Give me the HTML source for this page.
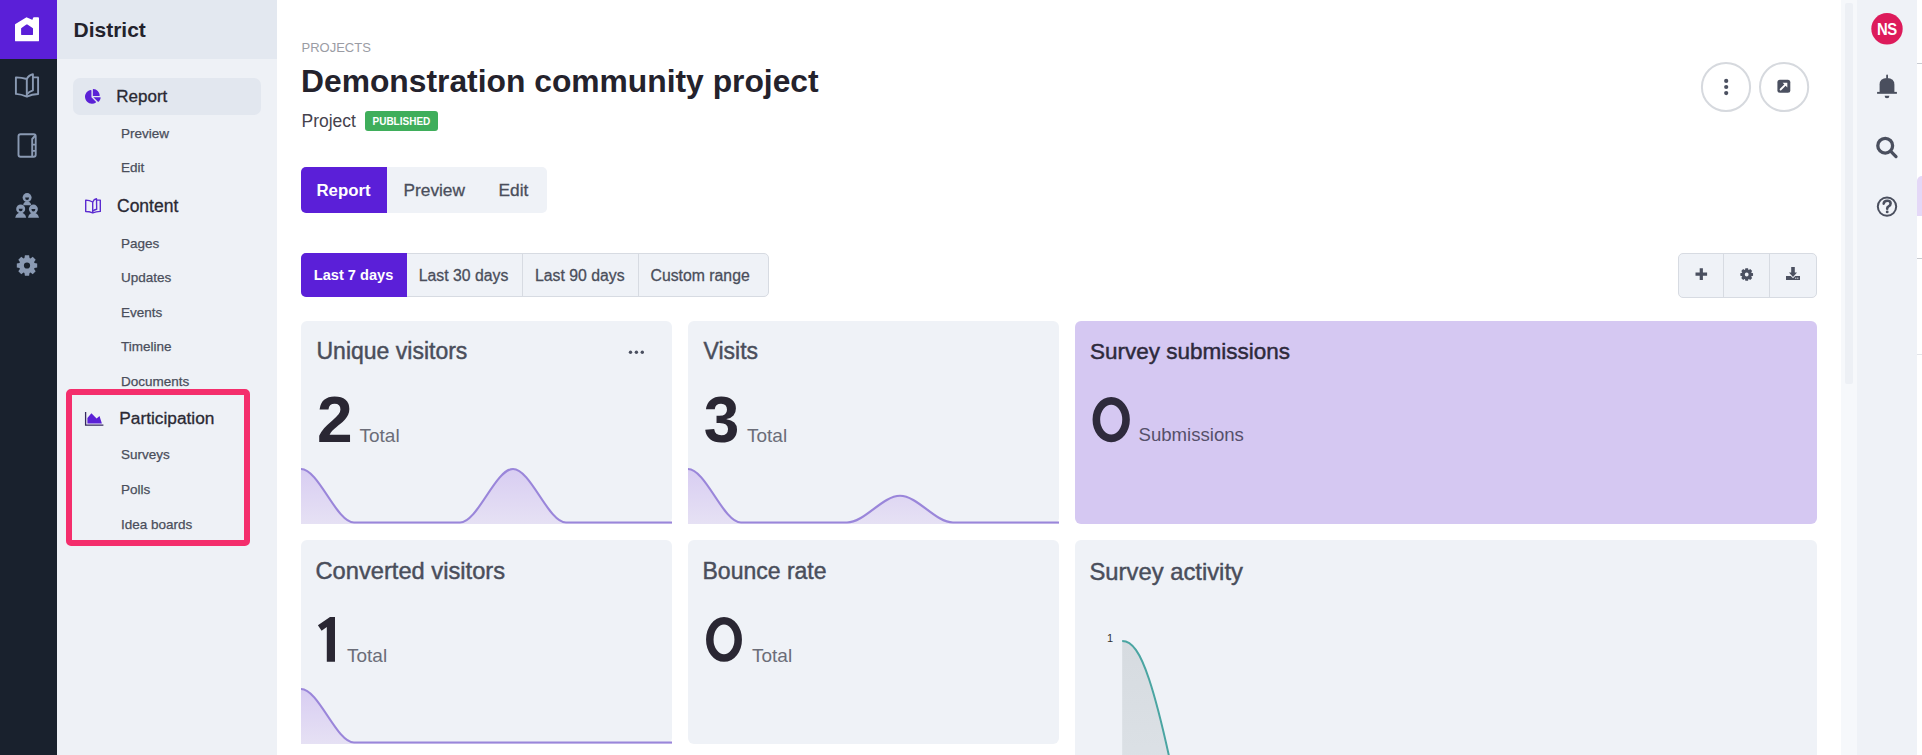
<!DOCTYPE html>
<html><head><meta charset="utf-8">
<style>
html,body{margin:0;padding:0;}
body{width:1922px;height:755px;overflow:hidden;position:relative;background:#fff;font-family:"Liberation Sans",sans-serif;}
.a{position:absolute;}
.t{position:absolute;white-space:nowrap;line-height:1;}
svg{position:absolute;left:0;top:0;overflow:visible;}
</style></head><body>
<div class="a" style="left:0;top:0;width:57px;height:755px;background:#19212d"></div>
<div class="a" style="left:0;top:0;width:57px;height:59px;background:#5b1fd8"></div>
<div class="a" style="left:57px;top:0;width:220px;height:755px;background:#eef1f6"></div>
<div class="a" style="left:57px;top:0;width:220px;height:59px;background:#e3e8f0"></div>
<div class="a" style="left:73px;top:78px;width:188px;height:37px;border-radius:7px;background:#e2e7ef"></div>
<div class="a" style="left:65.5px;top:389px;width:172px;height:144.5px;border:6.5px solid #f42e6c;border-radius:5px"></div>
<!-- scrollbar + right rail -->
<div class="a" style="left:1841px;top:0;width:16px;height:755px;background:#f6f8fb"></div>
<div class="a" style="left:1845px;top:3px;width:8px;height:381px;border-radius:2px;background:#edf0f5"></div>
<div class="a" style="left:1857px;top:0;width:60px;height:755px;background:#eff2f7"></div>
<div class="a" style="left:1917px;top:63px;width:5px;height:1px;background:#c9ccd2"></div>
<div class="a" style="left:1917px;top:258px;width:5px;height:1px;background:#c9ccd2"></div>
<div class="a" style="left:1917px;top:354px;width:5px;height:1px;background:#e3e5e9"></div>
<div class="a" style="left:1917px;top:176px;width:5px;height:40px;border-top-left-radius:5px;background:#e4d8f7"></div>
<!-- tabs -->
<div class="a" style="left:301px;top:167px;width:246px;height:46px;border-radius:5px;background:#eff2f7"></div>
<div class="a" style="left:301px;top:167px;width:86px;height:46px;border-radius:5px 0 0 5px;background:#5b1fd8"></div>
<!-- date range -->
<div class="a" style="left:301px;top:253px;width:465.5px;height:41.5px;border:1px solid #d7dbe2;border-radius:5px;background:#eff2f7"></div>
<div class="a" style="left:301px;top:253px;width:106px;height:43.5px;border-radius:5px 0 0 5px;background:#5b1fd8"></div>
<div class="a" style="left:522px;top:253px;width:1px;height:43px;background:#d7dbe2"></div>
<div class="a" style="left:638px;top:253px;width:1px;height:43px;background:#d7dbe2"></div>
<!-- toolbar -->
<div class="a" style="left:1678px;top:253px;width:136.5px;height:42.5px;border:1px solid #d7dbe2;border-radius:5px;background:#eff2f7"></div>
<div class="a" style="left:1723px;top:253px;width:1px;height:44.5px;background:#d7dbe2"></div>
<div class="a" style="left:1769px;top:253px;width:1px;height:44.5px;background:#d7dbe2"></div>
<!-- cards -->
<div class="a" style="left:301px;top:321px;width:371px;height:203px;border-radius:6px;background:#eff2f7;overflow:hidden"></div>
<div class="a" style="left:688px;top:321px;width:371px;height:203px;border-radius:6px;background:#eff2f7"></div>
<div class="a" style="left:1075px;top:321px;width:742px;height:203px;border-radius:6px;background:#d5c8f2"></div>
<div class="a" style="left:301px;top:540px;width:371px;height:204px;border-radius:6px;background:#eff2f7"></div>
<div class="a" style="left:688px;top:540px;width:371px;height:204px;border-radius:6px;background:#eff2f7"></div>
<div class="a" style="left:1075px;top:540px;width:742px;height:230px;border-radius:6px;background:#eff2f7"></div>
<svg width="1922" height="755" viewBox="0 0 1922 755">
<defs>
<linearGradient id="pg" x1="0" y1="0" x2="0" y2="1"><stop offset="0" stop-color="#d8cdf2"/><stop offset="1" stop-color="#e6e1f4"/></linearGradient>
<linearGradient id="gg" x1="0" y1="0" x2="0" y2="1"><stop offset="0" stop-color="#d6dbe0"/><stop offset="1" stop-color="#dce1e6"/></linearGradient>
</defs>
<!-- logo -->
<g transform="translate(15 17)" stroke-linejoin="round" stroke-width="1.8"><path fill="#fff" stroke="#fff" d="M0.9 7.8 L11.6 1.2 L17.9 4.0 L18.9 1.2 L23.1 1.2 L23.1 23.4 L0.9 23.4 Z"/><path fill="#5b1fd8" stroke="#5b1fd8" d="M11.9 8.3 L7 11.8 L7 17.2 L17.1 17.2 L17.1 11.8 Z"/></g>
<!-- rail book -->
<g transform="translate(14.9 73.4)" fill="none" stroke="#8a9ab3" stroke-width="1.9" stroke-linejoin="round">
<path d="M1 4 Q6.5 3.9 11.9 5.6 L11.9 23.2 Q6.5 20.9 1 20.5 Z"/>
<path d="M11.9 5.6 Q13.8 1.6 18 0.8 L18 17 Q14 18.3 11.9 21"/>
<path d="M18 4 L23.2 4 L23.2 20.6 Q17 20.8 11.9 23.2"/>
</g>
<!-- rail notebook -->
<g fill="none" stroke="#8a9ab3" stroke-width="1.9" stroke-linejoin="round">
<rect x="18.5" y="134.2" width="17.2" height="22.6" rx="2"/>
<path d="M35.3 135.5 L32.2 139 L32.2 156.5"/>
<path d="M32.2 144.6 H35.5 M32.2 150.9 H35.5"/>
</g>
<!-- rail people -->
<g fill="#8a9ab3">
<circle cx="27.1" cy="197.6" r="4.5"/>
<path d="M23.2 205.2 Q23.5 201.6 27.1 201.6 Q30.7 201.6 31.2 205.2 Z"/>
<circle cx="20.7" cy="208.9" r="4.5"/>
<path d="M15.2 217.8 Q16.3 212.8 20.7 212.8 Q25.1 212.8 26.2 217.8 Z"/>
<circle cx="33.4" cy="209.1" r="4.5"/>
<path d="M28 217.8 Q29.1 212.8 33.4 212.8 Q37.8 212.8 39 217.8 Z"/>
</g>
<g fill="#19212d">
<path d="M25.1 197.5 H29.1 Q29 200 27.1 200 Q25.2 200 25.1 197.5 Z"/>
<path d="M18.7 208.8 H22.7 Q22.6 211.3 20.7 211.3 Q18.8 211.3 18.7 208.8 Z"/>
<path d="M31.4 209 H35.4 Q35.3 211.5 33.4 211.5 Q31.5 211.5 31.4 209 Z"/>
</g>
<!-- rail gear -->
<path fill="#8a9ab3" fill-rule="evenodd" d="M24.45 258.02 L24.91 255.31 L29.09 255.31 L29.55 258.02 L30.48 258.41 L32.73 256.82 L35.68 259.77 L34.09 262.02 L34.48 262.95 L37.19 263.41 L37.19 267.59 L34.48 268.05 L34.09 268.98 L35.68 271.23 L32.73 274.18 L30.48 272.59 L29.55 272.98 L29.09 275.69 L24.91 275.69 L24.45 272.98 L23.52 272.59 L21.27 274.18 L18.32 271.23 L19.91 268.98 L19.52 268.05 L16.81 267.59 L16.81 263.41 L19.52 262.95 L19.91 262.02 L18.32 259.77 L21.27 256.82 L23.52 258.41 Z M30.10 265.50 A3.1 3.1 0 1 0 23.90 265.50 A3.1 3.1 0 1 0 30.10 265.50 Z"/>
<!-- sidebar pie -->
<g transform="translate(85 89) scale(0.0288)"><path fill="#5b21d6" d="M527.79 288H290.5l158.03 158.03c6.04 6.04 15.98 6.53 22.19 .68 38.7-36.46 65.32-85.61 73.13-140.86 1.34-9.46-6.51-17.85-16.06-17.85zm-15.83-64.8C503.72 103.74 408.26 8.28 288.8 .04 279.68-.59 272 7.1 272 16.24V240h223.77c9.14 0 16.82-7.68 16.19-16.8zM224 288V50.71c0-9.550-8.39-17.4-17.84-16.06C86.99 51.49-4.1 155.6 .14 280.37 4.5 408.51 114.83 513.59 243.03 511.98c50.4-.63 96.97-16.87 135.26-44.03 7.9-5.6 8.42-17.23 1.57-24.08L224 288z"/></g>
<!-- sidebar content book -->
<g transform="translate(85 198.2)" fill="none" stroke="#5b2bd0" stroke-width="1.4" stroke-linejoin="round">
<path d="M0.7 1.9 Q4.2 1.8 7.7 3.8 L7.7 14.6 Q4.2 13.3 0.7 13.3 Z"/>
<path d="M7.7 3.8 Q9 0.9 11.5 0.6 L11.7 11 Q9.2 11.5 7.7 12.9"/>
<path d="M11.7 1.9 L15.3 1.9 L15.3 13.2 Q11 13.4 7.7 14.6"/>
</g>
<!-- participation chart icon -->
<g transform="translate(85 411.9)">
<path d="M0.6 0 V13.2 H18.4" fill="none" stroke="#35285e" stroke-width="1.3"/>
<path fill="#5b21d6" d="M2.4 11.7 V6.2 L6.4 1.4 L11.6 6.5 L14.5 4.1 L16.9 11.7 Z"/>
</g>
<!-- header circles -->
<circle cx="1726" cy="87" r="24.1" fill="#fff" stroke="#d6d9de" stroke-width="2"/>
<circle cx="1726.2" cy="80.9" r="2.1" fill="#4b5060"/>
<circle cx="1726.2" cy="87" r="2.1" fill="#4b5060"/>
<circle cx="1726.2" cy="93.1" r="2.1" fill="#4b5060"/>
<circle cx="1784.1" cy="87" r="24.1" fill="#fff" stroke="#d6d9de" stroke-width="2"/>
<rect x="1777.4" y="79.8" width="12.9" height="12.9" rx="2.5" fill="#4b5060"/>
<path d="M1780.6 89.5 L1786.2 83.9" stroke="#fff" stroke-width="1.8" stroke-linecap="round"/>
<path d="M1782.6 82.8 H1787.3 V87.5 Z" fill="#fff"/>
<!-- toolbar icons -->
<path d="M1701.3 268.3 V279.9 M1695.5 274.1 H1707.1" stroke="#4b5060" stroke-width="3.2"/>
<path fill="#4b5060" fill-rule="evenodd" d="M1745.03 269.79 L1745.36 268.14 L1748.04 268.14 L1748.37 269.79 L1748.85 269.99 L1750.25 269.05 L1752.15 270.95 L1751.21 272.35 L1751.41 272.83 L1753.06 273.16 L1753.06 275.84 L1751.41 276.17 L1751.21 276.65 L1752.15 278.05 L1750.25 279.95 L1748.85 279.01 L1748.37 279.21 L1748.04 280.86 L1745.36 280.86 L1745.03 279.21 L1744.55 279.01 L1743.15 279.95 L1741.25 278.05 L1742.19 276.65 L1741.99 276.17 L1740.34 275.84 L1740.34 273.16 L1741.99 272.83 L1742.19 272.35 L1741.25 270.95 L1743.15 269.05 L1744.55 269.99 Z M1748.60 274.50 A1.9 1.9 0 1 0 1744.80 274.50 A1.9 1.9 0 1 0 1748.60 274.50 Z"/>
<g fill="#4b5060">
<rect x="1791.2" y="267" width="3.6" height="6"/>
<path d="M1789 272.5 H1797 L1793 277 Z"/>
<path d="M1786 276 H1790.8 L1793 278.2 L1795.2 276 H1800 V280 H1786 Z"/>
</g>
<circle cx="1795.8" cy="278.2" r="0.6" fill="#eff2f7"/><circle cx="1797.8" cy="278.2" r="0.6" fill="#eff2f7"/>
<!-- card dots -->
<circle cx="630.5" cy="352.2" r="1.7" fill="#4b5060"/><circle cx="636.4" cy="352.2" r="1.7" fill="#4b5060"/><circle cx="642.3" cy="352.2" r="1.7" fill="#4b5060"/>
<!-- charts -->
<path d="M301.00 469.00 C318.67 469.00 336.33 522.50 354.00 522.50 C371.67 522.50 389.33 522.50 407.00 522.50 C424.67 522.50 442.33 522.50 460.00 522.50 C477.67 522.50 495.33 469.00 513.00 469.00 C530.67 469.00 548.33 522.50 566.00 522.50 C583.67 522.50 601.33 522.50 619.00 522.50 C636.67 522.50 654.33 522.50 672.00 522.50 L672 524.0 L301 524.0 Z" fill="url(#pg)"/><path d="M301.00 469.00 C318.67 469.00 336.33 522.50 354.00 522.50 C371.67 522.50 389.33 522.50 407.00 522.50 C424.67 522.50 442.33 522.50 460.00 522.50 C477.67 522.50 495.33 469.00 513.00 469.00 C530.67 469.00 548.33 522.50 566.00 522.50 C583.67 522.50 601.33 522.50 619.00 522.50 C636.67 522.50 654.33 522.50 672.00 522.50" fill="none" stroke="#9a86da" stroke-width="2.2"/>
<path d="M688.00 469.00 C705.67 469.00 723.33 522.50 741.00 522.50 C758.67 522.50 776.33 522.50 794.00 522.50 C811.67 522.50 829.33 522.50 847.00 522.50 C864.67 522.50 882.33 495.75 900.00 495.75 C917.67 495.75 935.33 522.50 953.00 522.50 C970.67 522.50 988.33 522.50 1006.00 522.50 C1023.67 522.50 1041.33 522.50 1059.00 522.50 L1059 524.0 L688 524.0 Z" fill="url(#pg)"/><path d="M688.00 469.00 C705.67 469.00 723.33 522.50 741.00 522.50 C758.67 522.50 776.33 522.50 794.00 522.50 C811.67 522.50 829.33 522.50 847.00 522.50 C864.67 522.50 882.33 495.75 900.00 495.75 C917.67 495.75 935.33 522.50 953.00 522.50 C970.67 522.50 988.33 522.50 1006.00 522.50 C1023.67 522.50 1041.33 522.50 1059.00 522.50" fill="none" stroke="#9a86da" stroke-width="2.2"/>
<path d="M301.00 689.00 C318.67 689.00 336.33 742.50 354.00 742.50 C371.67 742.50 389.33 742.50 407.00 742.50 C424.67 742.50 442.33 742.50 460.00 742.50 C477.67 742.50 495.33 742.50 513.00 742.50 C530.67 742.50 548.33 742.50 566.00 742.50 C583.67 742.50 601.33 742.50 619.00 742.50 C636.67 742.50 654.33 742.50 672.00 742.50 L672 744.0 L301 744.0 Z" fill="url(#pg)"/><path d="M301.00 689.00 C318.67 689.00 336.33 742.50 354.00 742.50 C371.67 742.50 389.33 742.50 407.00 742.50 C424.67 742.50 442.33 742.50 460.00 742.50 C477.67 742.50 495.33 742.50 513.00 742.50 C530.67 742.50 548.33 742.50 566.00 742.50 C583.67 742.50 601.33 742.50 619.00 742.50 C636.67 742.50 654.33 742.50 672.00 742.50" fill="none" stroke="#9a86da" stroke-width="2.2"/>
<path d="M1122.2 641 C1132 641 1140 652 1149 679 C1155 697 1161 718 1172 770 L1122.2 770 Z" fill="url(#gg)"/>
<path d="M1122.2 641 C1132 641 1140 652 1149 679 C1155 697 1161 718 1172 770" fill="none" stroke="#4aa5a2" stroke-width="2"/>
<!-- right rail -->
<circle cx="1887" cy="28.8" r="15.7" fill="#dd1b5b"/>
<g fill="#4a4f5e">
<rect x="1886.2" y="74.6" width="1.8" height="4" rx="0.9"/>
<path d="M1879.6 92 L1879.6 84.6 Q1879.6 77.9 1887 77.9 Q1894.4 77.9 1894.4 84.6 L1894.4 92 Z"/>
<rect x="1877.1" y="91.9" width="19.8" height="1.9"/>
<path d="M1884.6 95.8 H1889.4 Q1889.4 98.3 1887 98.3 Q1884.6 98.3 1884.6 95.8 Z"/>
</g>
<circle cx="1885.2" cy="145.7" r="7.4" fill="none" stroke="#4a4f5e" stroke-width="3.3"/>
<path d="M1890.6 151.2 L1896 156.6" stroke="#4a4f5e" stroke-width="3.3" stroke-linecap="round"/>
<circle cx="1887" cy="206.6" r="9.2" fill="none" stroke="#4a4f5e" stroke-width="2"/>
<path d="M1883.7 203.6 Q1884 200.8 1887.3 200.8 Q1890.6 200.8 1890.6 203.5 Q1890.6 205.3 1888.6 206.3 Q1887.2 207 1887.2 208.4 V208.8" fill="none" stroke="#4a4f5e" stroke-width="2.6" stroke-linecap="round" stroke-linejoin="round"/>
<circle cx="1887.2" cy="211.9" r="1.45" fill="#4a4f5e"/>
</svg>
<div class="t" style="left:73.5px;top:19.4px;font-size:21px;font-weight:700;color:#23222c;">District</div>
<div class="t" style="left:116.3px;top:88.4px;font-size:17px;font-weight:400;color:#2a2933;-webkit-text-stroke:0.3px #2a2933">Report</div>
<div class="t" style="left:117px;top:197.8px;font-size:17.5px;font-weight:400;color:#2a2933;-webkit-text-stroke:0.3px #2a2933">Content</div>
<div class="t" style="left:119.3px;top:409.6px;font-size:17.3px;font-weight:400;color:#2a2933;-webkit-text-stroke:0.3px #2a2933">Participation</div>
<div class="t" style="left:121px;top:126.51px;font-size:13.5px;font-weight:400;color:#4a4e5b;-webkit-text-stroke:0.25px #4a4e5b">Preview</div>
<div class="t" style="left:121px;top:161.11px;font-size:13.5px;font-weight:400;color:#4a4e5b;-webkit-text-stroke:0.25px #4a4e5b">Edit</div>
<div class="t" style="left:121px;top:237.11px;font-size:13.5px;font-weight:400;color:#4a4e5b;-webkit-text-stroke:0.25px #4a4e5b">Pages</div>
<div class="t" style="left:121px;top:270.81px;font-size:13.5px;font-weight:400;color:#4a4e5b;-webkit-text-stroke:0.25px #4a4e5b">Updates</div>
<div class="t" style="left:121px;top:306.01px;font-size:13.5px;font-weight:400;color:#4a4e5b;-webkit-text-stroke:0.25px #4a4e5b">Events</div>
<div class="t" style="left:121px;top:339.51px;font-size:13.5px;font-weight:400;color:#4a4e5b;-webkit-text-stroke:0.25px #4a4e5b">Timeline</div>
<div class="t" style="left:121px;top:374.51px;font-size:13.5px;font-weight:400;color:#4a4e5b;-webkit-text-stroke:0.25px #4a4e5b">Documents</div>
<div class="t" style="left:121px;top:448.41px;font-size:13.5px;font-weight:400;color:#4a4e5b;-webkit-text-stroke:0.25px #4a4e5b">Surveys</div>
<div class="t" style="left:121px;top:483.31px;font-size:13.5px;font-weight:400;color:#4a4e5b;-webkit-text-stroke:0.25px #4a4e5b">Polls</div>
<div class="t" style="left:121px;top:518.21px;font-size:13.5px;font-weight:400;color:#4a4e5b;-webkit-text-stroke:0.25px #4a4e5b">Idea boards</div>
<div class="t" style="left:301.5px;top:40.8px;font-size:13px;font-weight:400;color:#9a9ca4;">PROJECTS</div>
<div class="t" style="left:301px;top:65.5px;font-size:31.8px;font-weight:700;color:#24222c;">Demonstration community project</div>
<div class="t" style="left:301.5px;top:113.3px;font-size:17.5px;font-weight:400;color:#45424d;">Project</div>
<div class="a" style="left:365px;top:111px;width:72.5px;height:19.6px;border-radius:3px;background:#3fae5b"></div>
<div class="t" style="left:372.5px;top:116.5px;font-size:10px;font-weight:700;color:#fff;">PUBLISHED</div>
<div class="t" style="left:316.5px;top:182.6px;font-size:16.8px;font-weight:700;color:#fff;">Report</div>
<div class="t" style="left:403.5px;top:182px;font-size:17.3px;font-weight:400;color:#4a4e5b;-webkit-text-stroke:0.3px #4a4e5b">Preview</div>
<div class="t" style="left:498.5px;top:182px;font-size:17.3px;font-weight:400;color:#4a4e5b;-webkit-text-stroke:0.3px #4a4e5b">Edit</div>
<div class="t" style="left:313.8px;top:267.7px;font-size:14.6px;font-weight:700;color:#fff;">Last 7 days</div>
<div class="t" style="left:418.8px;top:267.7px;font-size:15.8px;font-weight:400;color:#4a4e5b;-webkit-text-stroke:0.3px #4a4e5b">Last 30 days</div>
<div class="t" style="left:535px;top:267.7px;font-size:15.8px;font-weight:400;color:#4a4e5b;-webkit-text-stroke:0.3px #4a4e5b">Last 90 days</div>
<div class="t" style="left:650.5px;top:267.7px;font-size:15.8px;font-weight:400;color:#4a4e5b;-webkit-text-stroke:0.3px #4a4e5b">Custom range</div>
<div class="t" style="left:316.5px;top:340.2px;font-size:23px;font-weight:400;color:#4a4e5b;-webkit-text-stroke:0.45px #4a4e5b">Unique visitors</div>
<div class="t" style="left:703.5px;top:340.2px;font-size:23px;font-weight:400;color:#4a4e5b;-webkit-text-stroke:0.45px #4a4e5b">Visits</div>
<div class="t" style="left:1090px;top:341.2px;font-size:22.5px;font-weight:400;color:#2e2a3c;-webkit-text-stroke:0.45px #2e2a3c">Survey submissions</div>
<div class="t" style="left:315.5px;top:559.7px;font-size:23.7px;font-weight:400;color:#4a4e5b;-webkit-text-stroke:0.45px #4a4e5b">Converted visitors</div>
<div class="t" style="left:702.5px;top:559.7px;font-size:23px;font-weight:400;color:#4a4e5b;-webkit-text-stroke:0.45px #4a4e5b">Bounce rate</div>
<div class="t" style="left:1089.5px;top:559.7px;font-size:23.8px;font-weight:400;color:#4a4e5b;-webkit-text-stroke:0.45px #4a4e5b">Survey activity</div>
<div class="t" style="left:317px;top:387.5px;font-size:64px;font-weight:700;color:#2a2733;">2</div>
<div class="t" style="left:703.8px;top:387.5px;font-size:64px;font-weight:700;color:#2a2733;">3</div>
<svg width="1922" height="755"><ellipse cx="1111.2" cy="419.6" rx="14.85" ry="18.75" fill="none" stroke="#2e2a3c" stroke-width="7.6"/><ellipse cx="724" cy="639.4" rx="14.2" ry="18.7" fill="none" stroke="#2a2733" stroke-width="7.5"/><path fill="#2a2733" d="M317.9 625.2 L330 617.1 L335 617.1 L335 661.8 L326.8 661.8 L326.8 627 L321.6 630.8 Z"/></svg>
<div class="t" style="left:359.5px;top:426px;font-size:19px;font-weight:400;color:#6b6d78;">Total</div>
<div class="t" style="left:747px;top:426px;font-size:19px;font-weight:400;color:#6b6d78;">Total</div>
<div class="t" style="left:1138.5px;top:426px;font-size:18.6px;font-weight:400;color:#55506a;">Submissions</div>
<div class="t" style="left:347px;top:646px;font-size:19px;font-weight:400;color:#6b6d78;">Total</div>
<div class="t" style="left:752px;top:646px;font-size:19px;font-weight:400;color:#6b6d78;">Total</div>
<div class="t" style="left:1107px;top:633px;font-size:11px;font-weight:400;color:#333;">1</div>
<div class="t" style="left:1877.2px;top:20.6px;font-size:16.5px;font-weight:700;color:#fff;letter-spacing:-0.6px;transform:scaleX(0.9);transform-origin:0 0">NS</div>
</body></html>
